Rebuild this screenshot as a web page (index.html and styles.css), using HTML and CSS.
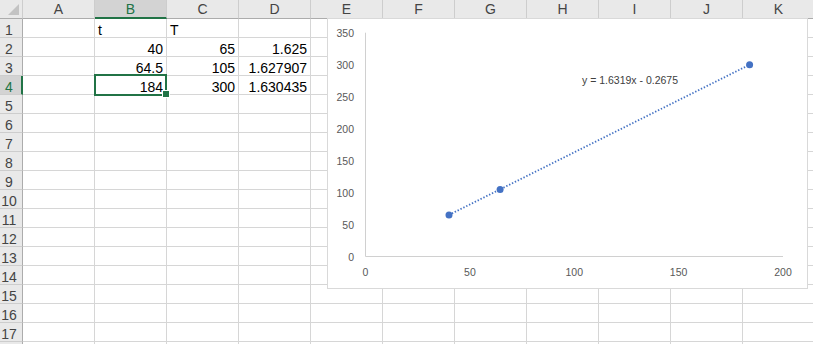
FILE: index.html
```html
<!DOCTYPE html>
<html lang="en">
  <head>
    <meta charset="UTF-8" />
    <title>Sheet1</title>
    <link rel="stylesheet" href="styles.css">
  </head>
  <body>
    <div class="sheet">
      <table class="grid">
        <colgroup>
          <col class="head-col">
          <col><col><col><col><col><col><col><col><col><col><col>
        </colgroup>
        <thead>
          <tr>
            <th class="corner">
              <svg width="22" height="18" viewBox="0 0 22 18"><polygon points="19,4 19,15 8,15" fill="#c3c3c3" /></svg>
            </th>
            <th>A</th><th class="sel-col">B</th><th>C</th><th>D</th><th>E</th><th>F</th>
            <th>G</th><th>H</th><th>I</th><th>J</th><th>K</th>
          </tr>
        </thead>
        <tbody>
          <tr><th>1</th><td></td><td>t</td><td>T</td><td></td><td></td><td></td><td></td><td></td><td></td><td></td><td></td></tr>
          <tr><th>2</th><td></td><td class="num">40</td><td class="num">65</td><td class="num">1.625</td><td></td><td></td><td></td><td></td><td></td><td></td><td></td></tr>
          <tr><th>3</th><td></td><td class="num">64.5</td><td class="num">105</td><td class="num">1.627907</td><td></td><td></td><td></td><td></td><td></td><td></td><td></td></tr>
          <tr><th class="sel-row">4</th><td></td><td class="num active">184</td><td class="num">300</td><td class="num">1.630435</td><td></td><td></td><td></td><td></td><td></td><td></td><td></td></tr>
          <tr><th>5</th><td></td><td></td><td></td><td></td><td></td><td></td><td></td><td></td><td></td><td></td><td></td></tr>
          <tr><th>6</th><td></td><td></td><td></td><td></td><td></td><td></td><td></td><td></td><td></td><td></td><td></td></tr>
          <tr><th>7</th><td></td><td></td><td></td><td></td><td></td><td></td><td></td><td></td><td></td><td></td><td></td></tr>
          <tr><th>8</th><td></td><td></td><td></td><td></td><td></td><td></td><td></td><td></td><td></td><td></td><td></td></tr>
          <tr><th>9</th><td></td><td></td><td></td><td></td><td></td><td></td><td></td><td></td><td></td><td></td><td></td></tr>
          <tr><th>10</th><td></td><td></td><td></td><td></td><td></td><td></td><td></td><td></td><td></td><td></td><td></td></tr>
          <tr><th>11</th><td></td><td></td><td></td><td></td><td></td><td></td><td></td><td></td><td></td><td></td><td></td></tr>
          <tr><th>12</th><td></td><td></td><td></td><td></td><td></td><td></td><td></td><td></td><td></td><td></td><td></td></tr>
          <tr><th>13</th><td></td><td></td><td></td><td></td><td></td><td></td><td></td><td></td><td></td><td></td><td></td></tr>
          <tr><th>14</th><td></td><td></td><td></td><td></td><td></td><td></td><td></td><td></td><td></td><td></td><td></td></tr>
          <tr><th>15</th><td></td><td></td><td></td><td></td><td></td><td></td><td></td><td></td><td></td><td></td><td></td></tr>
          <tr><th>16</th><td></td><td></td><td></td><td></td><td></td><td></td><td></td><td></td><td></td><td></td><td></td></tr>
          <tr><th>17</th><td></td><td></td><td></td><td></td><td></td><td></td><td></td><td></td><td></td><td></td><td></td></tr>
          <tr><th></th><td></td><td></td><td></td><td></td><td></td><td></td><td></td><td></td><td></td><td></td><td></td></tr>
        </tbody>
      </table>

      <!-- scatter chart floating over E1:K14 -->
      <div class="chart">
        <svg class="plot" width="479" height="269" viewBox="0 0 479 269">
          <g class="axis-labels y-labels">
            <text x="26" y="237.5">0</text>
            <text x="26" y="205.5">50</text>
            <text x="26" y="173.6">100</text>
            <text x="26" y="141.6">150</text>
            <text x="26" y="109.6">200</text>
            <text x="26" y="77.7">250</text>
            <text x="26" y="45.7">300</text>
            <text x="26" y="13.7">350</text>
          </g>
          <g class="axis-labels x-labels">
            <text x="37.5" y="253">0</text>
            <text x="141.9" y="253">50</text>
            <text x="246.3" y="253">100</text>
            <text x="350.6" y="253">150</text>
            <text x="455" y="253">200</text>
          </g>
          <line class="axis" x1="37.5" y1="13.7" x2="37.5" y2="237.5" />
          <line class="axis" x1="37.5" y1="237.5" x2="455" y2="237.5" />

          <line class="trend" x1="121" y1="195.9" x2="421.6" y2="45.7" />
          <circle class="point" cx="121" cy="195.9" r="3.5" />
          <circle class="point" cx="172.1" cy="170.4" r="3.5" />
          <circle class="point" cx="421.6" cy="45.7" r="3.5" />

          <text class="equation" x="254" y="61">y = 1.6319x - 0.2675</text>
        </svg>
      </div>
    </div>
  </body>
</html>
```

FILE: styles.css
```css
body {
  margin: 0;
  background-color: #ffffff;
  overflow: hidden;
  font-family: "Liberation Sans", Arial, sans-serif;
}

.sheet {
  position: relative;
  width: 813px;
  height: 344px;
  overflow: hidden;
}

.grid {
  border-collapse: separate;
  border-spacing: 0;
  table-layout: fixed;
  width: 815px;
}

.grid col {
  width: 72px;
}

.grid col.head-col {
  width: 23px;
}

.grid th,
.grid td {
  box-sizing: border-box;
  height: 19px;
  padding: 0 3px;
  border-right: 1px solid #d6d6d6;
  border-bottom: 1px solid #d6d6d6;
  white-space: nowrap;
  overflow: hidden;
}

.grid td {
  font-size: 14px;
  line-height: 14px;
  color: #000000;
  vertical-align: bottom;
  text-align: left;
}

.grid td.num {
  text-align: right;
}

/* headers */
.grid thead th {
  background-color: #e9e9e9;
  color: #444444;
  font-weight: normal;
  font-size: 14px;
  text-align: center;
  vertical-align: middle;
  border-right: 1px solid #cdcdcd;
  border-bottom: 1px solid #acacac;
  padding: 0;
}

.grid thead th.corner {
  padding: 0;
  line-height: 0;
}

.grid thead th.corner svg {
  display: block;
}

.grid thead th.sel-col {
  background-color: #d3d3d3;
  color: #217346;
  border-bottom: 2px solid #217346;
}

.grid tbody th {
  background-color: #e9e9e9;
  color: #444444;
  font-weight: normal;
  font-size: 14px;
  line-height: 14px;
  text-align: center;
  vertical-align: bottom;
  padding: 0 4px 0 0;
  border-right: 1px solid #acacac;
  border-bottom: 1px solid #cdcdcd;
}

.grid tbody th.sel-row {
  background-color: #d3d3d3;
  color: #217346;
  border-right: 2px solid #217346;
  padding-right: 3px;
}

/* active cell outline + fill handle */
.grid td.active {
  position: relative;
  overflow: visible;
}

.grid td.active::after {
  content: "";
  position: absolute;
  left: -1px;
  top: -2px;
  right: -1px;
  bottom: -2px;
  border: 2px solid #217346;
}

.grid td.active::before {
  content: "";
  position: absolute;
  right: -3px;
  bottom: -3px;
  width: 6px;
  height: 6px;
  background-color: #217346;
  box-shadow: 0 0 0 1px #ffffff;
  z-index: 2;
}

/* chart */
.chart {
  position: absolute;
  left: 327px;
  top: 18px;
  width: 481px;
  height: 271px;
  box-sizing: border-box;
  border: 1px solid #d9d9d9;
  background-color: #ffffff;
}

.plot {
  display: block;
}

.axis {
  stroke: #d0d0d0;
  stroke-width: 1;
}

.axis-labels text {
  font-family: "Liberation Sans", Arial, sans-serif;
  font-size: 10.5px;
  fill: #595959;
  dominant-baseline: central;
}

.y-labels text {
  text-anchor: end;
}

.x-labels text {
  text-anchor: middle;
}

.trend {
  stroke: #4472c4;
  stroke-width: 1.8;
  stroke-dasharray: 1.4 1.8;
}

.point {
  fill: #4472c4;
}

.equation {
  font-family: "Liberation Sans", Arial, sans-serif;
  font-size: 10.5px;
  fill: #404040;
  dominant-baseline: central;
}
```
